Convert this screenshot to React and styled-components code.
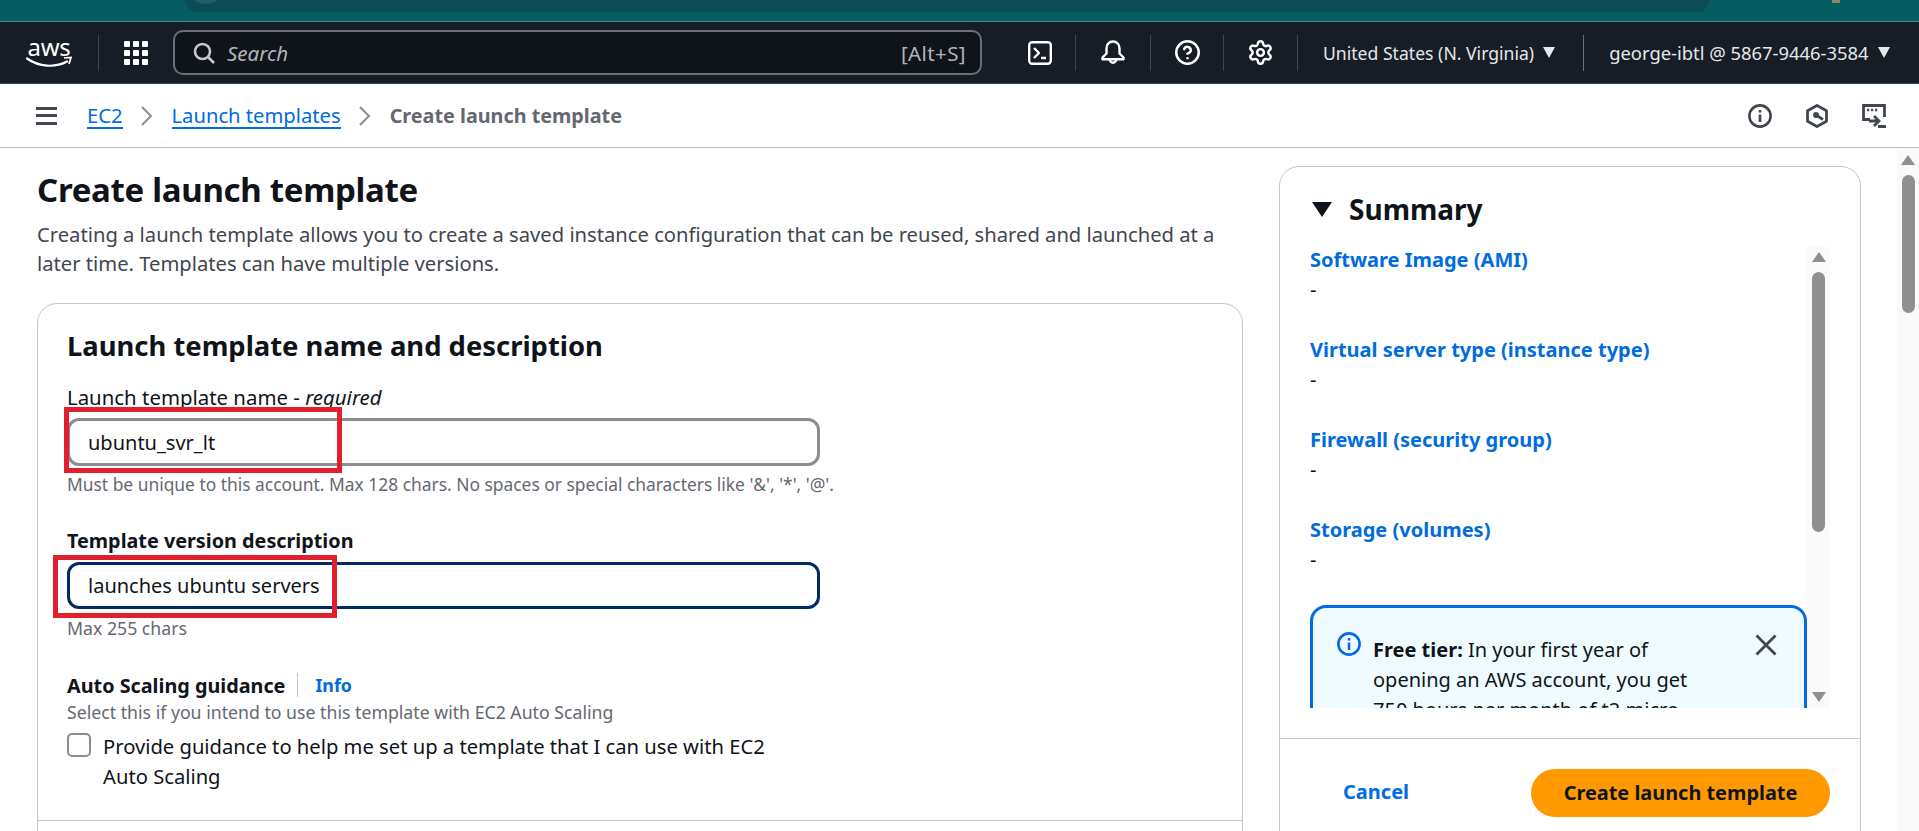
import React from 'react';
import styled, { createGlobalStyle } from 'styled-components';
import { CircleHelp, Settings } from 'lucide-react';

const FONT = `"Noto Sans", Roboto, "Liberation Sans", sans-serif`;
const Global = createGlobalStyle`
  html, body { margin: 0; padding: 0; height: 100%; overflow: hidden; background: #fff; }
  body { font-family: ${FONT}; color: #0f141a; }
  * { box-sizing: border-box; }
`;

const Page = styled.div`height: 831px; display: flex; flex-direction: column; overflow: hidden;`;

/* top strip */
const Strip = styled.div`
  flex: none; height: 22px; background: #055c63; border-bottom: 1px solid #3f8f8f;
  display: flex; align-items: flex-start; padding-left: 185px;
`;
const StripPill = styled.div`
  position: relative; width: 1524px; height: 12px; background: #0d4c55; border-radius: 0 0 14px 14px; overflow: hidden;
  &::before { content: ''; position: absolute; left: 8px; top: -11px; width: 26px; height: 15px; border-radius: 50%; background: #1d6168; }
`;
const StripSpeck = styled.div`width: 8px; height: 3px; margin-left: 123px; background: #8f8668;`;

/* global nav */
const TopBar = styled.header`
  flex: none; height: 62px; background: #161d26; border-bottom: 1px solid #3a4048;
  display: flex; align-items: center; color: #fff;
`;
const Logo = styled.div`
  width: 46px; margin-left: 26px; display: flex; flex-direction: column; align-items: center; height: 30px;
`;
const LogoText = styled.span`
  font: 400 24px/18px "Noto Sans", sans-serif; letter-spacing: -0.3px; color: #fff; height: 18px;
`;
const NavSep = styled.div`
  width: 1px; height: 36px; background: ${p => p.$c || '#414750'}; flex: none; margin-left: ${p => p.$ml || 0}px;
`;
const GridIcon = styled.div`
  margin: 0 25px; width: 24px; height: 24px; display: grid; grid-template-columns: repeat(3, 6px); grid-auto-rows: 6px; gap: 3px;
  & > i { background: #fff; border-radius: 1px; display: block; }
`;
const SearchBox = styled.div`
  width: 809px; height: 45px; background: #0f141a; border: 2.5px solid #687078; border-radius: 10px;
  display: flex; align-items: center; padding: 0 14px 0 18px; gap: 12px; color: #b4b4bb; font-size: 20.5px;
`;
const SearchPh = styled.span`font-style: italic; flex: 1; color: #b4b4bb;`;
const SearchKey = styled.span`letter-spacing: 0.4px;`;
const NavIcon = styled.div`
  width: ${p => p.$w}px; padding-left: ${p => p.$pl || 0}px; display: flex; justify-content: center; flex: none;
`;
const NavText = styled.div`
  display: flex; align-items: center; gap: ${p => p.$gap}px; margin-left: ${p => p.$ml}px; font-size: ${p => p.$fs}px;
  color: #e6e7e9; white-space: nowrap; flex: none;
`;
const Caret = styled.span`
  width: 0; height: 0; border-left: 6px solid transparent; border-right: 6px solid transparent; border-top: 11px solid #e6e7e9;
`;

/* breadcrumb bar */
const CrumbBar = styled.div`
  flex: none; height: 64px; border-bottom: 1.5px solid #bdbdc2; display: flex; align-items: center; padding-left: 36px; background: #fff;
`;
const Burger = styled.div`
  width: 21px; height: 18px; margin-right: 30px; display: flex; flex-direction: column; justify-content: space-between;
  & > i { display: block; height: 3px; background: #424650; }
`;
const CrumbLink = styled.a`
  font-size: 20.2px; color: #006ce0; border-bottom: 2px solid #006ce0; line-height: 24px; white-space: nowrap;
`;
const CrumbNow = styled.span`font-size: 19.8px; font-weight: 700; color: #656871; white-space: nowrap;`;
const CrumbChevron = styled.span`display: flex; width: 49px; justify-content: center; color: #8c8c94;`;
const ToolIcons = styled.div`margin-left: auto; margin-right: 33px; display: flex; gap: 33px; color: #424650;`;

/* body */
const Body = styled.div`flex: 1; min-height: 0; display: flex; overflow: hidden;`;
const Main = styled.main`flex: none; width: 1243px; padding: 22px 0 0 37px;`;
const PageTitle = styled.h1`margin: 0; font-size: 33px; line-height: 40px; font-weight: 700; letter-spacing: -0.3px; white-space: nowrap;`;
const PageDesc = styled.p`margin: 10px 0 0; font-size: 20.2px; line-height: 29px; color: #424650; max-width: 1190px;`;

const Card = styled.section`
  margin-top: 25px; width: 1206px; height: 700px; border: 1px solid #c6c6cd; border-radius: 20px; background: #fff;
`;
const CardBody = styled.div`padding: 24px 29px 29px; border-bottom: 1px solid #c6c6cd;`;
const CardTitle = styled.h2`margin: 0; font-size: 27.4px; line-height: 36px; font-weight: 700; white-space: nowrap;`;
const Label = styled.label`
  display: block; margin-top: ${p => p.$mt}px; font-size: ${p => (p.$bold ? 19.8 : 20.4)}px; line-height: 26px;
  font-weight: ${p => (p.$bold ? 700 : 400)};
  & em { font-style: italic; }
`;
const InputWrap = styled.div`position: relative; margin-top: 8px; width: 753px;`;
const Input = styled.div`
  height: ${p => p.$h}px; border: 3px solid ${p => p.$c}; border-radius: 12px; padding: 0 18px;
  display: flex; align-items: center; font-size: 20px; color: #0f141a; background: #fff;
`;
const RedMark = styled.div`
  position: absolute; left: ${p => p.$l}px; top: ${p => p.$t}px; width: ${p => p.$w}px; height: ${p => p.$h}px;
  border: 5px solid #e0202e; pointer-events: none;
`;
const Hint = styled.div`
  margin-top: ${p => p.$mt}px; font-size: ${p => p.$fs || 17.7}px; line-height: 22px; color: #656871; white-space: nowrap;
`;
const InfoRow = styled.div`margin-top: 34px; display: flex; align-items: center; height: 24px;`;
const RowLabel = styled.span`font-size: 19.8px; font-weight: 700; white-space: nowrap;`;
const InfoLink = styled.a`
  margin-left: 12px; padding-left: 17px; border-left: 1px solid #c6c6cd; font-size: 17.8px; font-weight: 700; color: #006ce0; line-height: 24px;
`;
const CheckRow = styled.div`margin-top: 8px; display: flex; gap: 12px; width: 722px;`;
const CheckBox = styled.span`
  flex: none; width: 24px; height: 24px; margin-top: 2px; border: 2.5px solid #8c8c94; border-radius: 5px; background: #fff;
`;
const CheckText = styled.div`font-size: 20.2px; line-height: 30px;`;

/* summary */
const Side = styled.aside`
  flex: none; width: 582px; margin: 18px 0 0 36px; height: 700px; border: 1px solid #c6c6cd; border-radius: 20px; background: #fff;
  display: flex; flex-direction: column;
`;
const SideHead = styled.div`flex: none; padding: 24px 0 0 32px; display: flex; align-items: center; gap: 17px; height: 60px;`;
const SideTri = styled.span`
  width: 0; height: 0; border-left: 10px solid transparent; border-right: 10px solid transparent; border-top: 15px solid #0f141a;
`;
const SideTitle = styled.h2`margin: 0; font-size: 28px; line-height: 36px; font-weight: 700;`;
const ScrollArea = styled.div`
  flex: none; margin: 20px 0 0 30px; width: 520px; height: 461px; display: flex; overflow: hidden;
`;
const ScrollContent = styled.div`width: 497px; flex: none;`;
const TermBlock = styled.div`margin-bottom: 34px;`;
const Term = styled.a`display: block; font-size: 20px; line-height: 26px; font-weight: 700; color: #006ce0; white-space: nowrap;`;
const Dash = styled.div`margin-top: 4px; font-size: 20px; line-height: 26px; color: #0f141a;`;
const Alert = styled.div`
  margin-top: -2px; border: 3px solid #006ce0; border-radius: 16px; background: #f0fbff; padding: 27px 27px 24px 24px;
  display: flex; align-items: flex-start; height: 240px;
`;
const AlertIcon = styled.span`flex: none; width: 24px; height: 24px; margin: -3px 12px 0 0; color: #006ce0; display: flex;`;
const AlertText = styled.div`flex: 1; font-size: 20px; line-height: 30px; max-width: 340px;`;
const AlertClose = styled.span`flex: none; margin: -1px 0 0 auto; color: #424650; display: flex;`;
const Scrollbar = styled.div`
  flex: none; width: ${p => p.$w}px; background: #fafafa; display: flex; flex-direction: column; align-items: center;
`;
const ArrowUp = styled.span`
  flex: none; margin-top: ${p => p.$mt}px; width: 0; height: 0; border-left: 7.5px solid transparent; border-right: 7.5px solid transparent; border-bottom: 10px solid #8f8f8f;
`;
const ArrowDown = styled.span`
  flex: none; margin-top: auto; margin-bottom: 6px; width: 0; height: 0; border-left: 7.5px solid transparent; border-right: 7.5px solid transparent; border-top: 10px solid #8f8f8f;
`;
const Thumb = styled.span`
  flex: none; margin-top: 10px; width: ${p => p.$w}px; height: ${p => p.$h}px; border-radius: 7px; background: #8f8f8f;
`;
const SideFoot = styled.div`
  flex: none; margin-top: 30px; padding: 30px 30px 0 0; border-top: 1px solid #c6c6cd; display: flex; align-items: center; justify-content: space-between;
`;
const CancelLink = styled.a`margin-left: 63px; font-size: 20px; line-height: 26px; font-weight: 700; color: #006ce0; margin-top: -2px;`;
const PrimaryBtn = styled.button`
  width: 299px; height: 48px; border: 0; border-radius: 24px; background: #ff9900; color: #0f141a;
  font: 700 19.9px ${FONT}; padding: 0 0 2px;
`;
const PageScroll = styled(Scrollbar)`margin-left: auto;`;

const AwsSmile = () => (
  <svg width="46" height="12" viewBox="0 0 46 12" fill="none">
    <path d="M1 2.5c12 8.5 28 9.5 40 3" stroke="#fff" strokeWidth="2.2" strokeLinecap="round" />
    <path d="M38 2l7-.6-2 6.6" stroke="#fff" strokeWidth="1.7" />
  </svg>
);
const CloudShell = () => (
  <svg width="24" height="24" viewBox="0 0 24 24" fill="none" stroke="#fff" strokeWidth="2.4">
    <rect x="1.2" y="1.2" width="21.6" height="21.6" rx="3" />
    <path d="M6 7l5 5-5 5M13 17h5" strokeLinejoin="round" />
  </svg>
);
const BellGlyph = () => (
  <svg width="24" height="25" viewBox="0 0 24 25" fill="none" stroke="#fff" strokeWidth="2.4" strokeLinejoin="round">
    <path d="M12 1.5c-4 0-6.5 3-6.5 7v5L1.5 17.5v1.7h21v-1.7l-4-4v-5c0-4-2.500-7-6.500-7z" />
    <path d="M8.800 19.500a3.200 3.200 0 0 0 6.400 0" />
  </svg>
);
const SearchGlyph = () => (
  <svg width="22" height="22" viewBox="0 0 22 22" fill="none" stroke="#c6c6cd" strokeWidth="2.6">
    <circle cx="9.5" cy="9.5" r="7.5" /><path d="M15 15l6 6" />
  </svg>
);
const InfoGlyph = () => (
  <svg width="24" height="24" viewBox="0 0 24 24" fill="none" stroke="currentColor" strokeWidth="2.6">
    <circle cx="12" cy="12" r="10.600" /><path d="M12 10.500V18" /><path d="M12 6v2.600" />
  </svg>
);
const CloseGlyph = () => (
  <svg width="22" height="22" viewBox="0 0 22 22" fill="none" stroke="currentColor" strokeWidth="2.8"><path d="M1.500 1.500l19 19M20.500 1.500l-19 19" /></svg>
);
const HexGlyph = () => (
  <svg width="24" height="24" viewBox="0 0 24 24" fill="none" stroke="currentColor" strokeWidth="2.8">
    <path d="M12 1.500l9.500 5.250v10.500L12 22.500l-9.500-5.250V6.750z" strokeLinejoin="round" />
    <circle cx="11" cy="11" r="3" fill="currentColor" stroke="none" />
    <path d="M11 11l7 4.500" />
  </svg>
);
const ConsoleGlyph = () => (
  <svg width="24" height="24" viewBox="0 0 24 24" fill="none" stroke="currentColor" strokeWidth="2.8">
    <path d="M8 15.500H1.500v-14h21V13" />
    <path d="M5 6h2.200M9 6h2.200M13 6h2.200" strokeWidth="2.600" />
    <path d="M7 17h9M12 12l5 5-5 5" />
    <path d="M16 22.500h8" strokeWidth="3" />
  </svg>
);
const Chevron = () => (
  <svg width="14" height="22" viewBox="0 0 14 22" fill="none" stroke="currentColor" strokeWidth="2"><path d="M2 2l9 9-9 9" /></svg>
);

const terms = ['Software Image (AMI)', 'Virtual server type (instance type)', 'Firewall (security group)', 'Storage (volumes)'];

export default function App() {
  return (
    <Page>
      <Global />
      <Strip><StripPill /><StripSpeck /></Strip>
      <TopBar>
        <Logo>
          <LogoText>aws</LogoText>
          <AwsSmile />
        </Logo>
        <NavSep $ml={26} />
        <GridIcon>{Array.from({ length: 9 }, (_, i) => <i key={i} />)}</GridIcon>
        <SearchBox>
          <SearchGlyph />
          <SearchPh>Search</SearchPh>
          <SearchKey>[Alt+S]</SearchKey>
        </SearchBox>
        <NavIcon $w={93} $pl={22}><CloudShell /></NavIcon>
        <NavSep />
        <NavIcon $w={74}><BellGlyph /></NavIcon>
        <NavSep />
        <NavIcon $w={72}><CircleHelp size={27} strokeWidth={2.2} /></NavIcon>
        <NavSep />
        <NavIcon $w={73}><Settings size={27} strokeWidth={2.2} /></NavIcon>
        <NavSep />
        <NavText $ml={25} $fs={17.6} $gap={9}>United States (N. Virginia)<Caret /></NavText>
        <NavSep $c="#687078" $ml={28} />
        <NavText $ml={25} $fs={18.4} $gap={9}>george-ibtl @ 5867-9446-3584<Caret /></NavText>
      </TopBar>
      <CrumbBar>
        <Burger><i /><i /><i /></Burger>
        <CrumbLink>EC2</CrumbLink>
        <CrumbChevron><Chevron /></CrumbChevron>
        <CrumbLink>Launch templates</CrumbLink>
        <CrumbChevron><Chevron /></CrumbChevron>
        <CrumbNow>Create launch template</CrumbNow>
        <ToolIcons><InfoGlyph /><HexGlyph /><ConsoleGlyph /></ToolIcons>
      </CrumbBar>
      <Body>
        <Main>
          <PageTitle>Create launch template</PageTitle>
          <PageDesc>Creating a launch template allows you to create a saved instance configuration that can be reused, shared and launched at a later time. Templates can have multiple versions.</PageDesc>
          <Card>
            <CardBody>
              <CardTitle>Launch template name and description</CardTitle>
              <Label $mt={20}>Launch template name - <em>required</em></Label>
              <InputWrap>
                <Input $h={48} $c="#8c8c94">ubuntu_svr_lt</Input>
                <RedMark $l={-3} $t={-11} $w={278} $h={66} />
              </InputWrap>
              <Hint $mt={7} $fs={17.4}>Must be unique to this account. Max 128 chars. No spaces or special characters like '&amp;', '*', '@'.</Hint>
              <Label $mt={33} $bold>Template version description</Label>
              <InputWrap>
                <Input $h={47} $c="#002b66">launches ubuntu servers</Input>
                <RedMark $l={-14} $t={-7} $w={284} $h={63} />
              </InputWrap>
              <Hint $mt={8}>Max 255 chars</Hint>
              <InfoRow><RowLabel>Auto Scaling guidance</RowLabel><InfoLink>Info</InfoLink></InfoRow>
              <Hint $mt={4}>Select this if you intend to use this template with EC2 Auto Scaling</Hint>
              <CheckRow>
                <CheckBox />
                <CheckText>Provide guidance to help me set up a template that I can use with EC2 Auto Scaling</CheckText>
              </CheckRow>
            </CardBody>
          </Card>
        </Main>
        <Side>
          <SideHead><SideTri /><SideTitle>Summary</SideTitle></SideHead>
          <ScrollArea>
            <ScrollContent>
              {terms.map(t => (
                <TermBlock key={t}><Term>{t}</Term><Dash>-</Dash></TermBlock>
              ))}
              <Alert>
                <AlertIcon><InfoGlyph /></AlertIcon>
                <AlertText><b>Free tier:</b> In your first year of opening an AWS account, you get 750 hours per month of t2.micro</AlertText>
                <AlertClose><CloseGlyph /></AlertClose>
              </Alert>
            </ScrollContent>
            <Scrollbar $w={23}>
              <ArrowUp $mt={5} />
              <Thumb $w={13} $h={260} />
              <ArrowDown />
            </Scrollbar>
          </ScrollArea>
          <SideFoot>
            <CancelLink>Cancel</CancelLink>
            <PrimaryBtn>Create launch template</PrimaryBtn>
          </SideFoot>
        </Side>
        <PageScroll $w={22}>
          <ArrowUp $mt={7} />
          <Thumb $w={13} $h={138} />
        </PageScroll>
      </Body>
    </Page>
  );
}
